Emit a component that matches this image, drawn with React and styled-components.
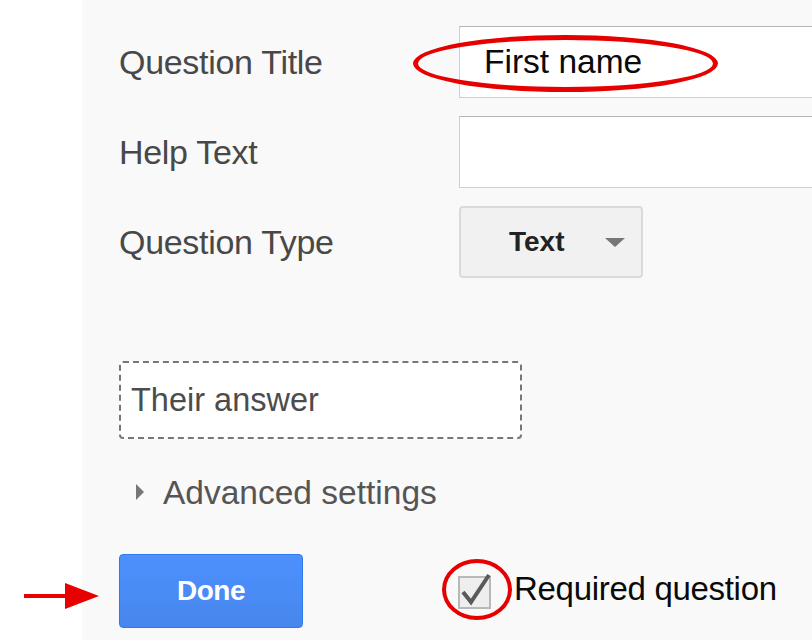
import React from "react";
import styled, { createGlobalStyle } from "styled-components";

const GlobalStyle = createGlobalStyle`
    html, body {
        margin: 0;
        padding: 0;
        background: #ffffff;
    }
    body {
        font-family: "Liberation Sans", Arial, sans-serif;
    }
`;

function App() {
    return (
        <>
            <GlobalStyle />
            <Page>
                <Gutter />
                <Panel>
                    <FormGrid>
                        <Label>Question Title</Label>
                        <InputWrap>
                            <TextInput>First name</TextInput>
                            <Ellipse />
                        </InputWrap>

                        <Label>Help Text</Label>
                        <InputWrap>
                            <TextInput />
                        </InputWrap>

                        <Label>Question Type</Label>
                        <div>
                            <Select>
                                <span>Text</span>
                                <Caret />
                            </Select>
                        </div>
                    </FormGrid>

                    <AnswerBox>Their answer</AnswerBox>

                    <Advanced>
                        <DisclosureArrow />
                        <span>Advanced settings</span>
                    </Advanced>

                    <BottomRow>
                        <ButtonCell>
                            <PointerArrow width="76" height="26" viewBox="0 0 76 26">
                                <rect x="0" y="11" width="43" height="4" fill="#e60000" />
                                <polygon points="41,0 75,13 41,26" fill="#e60000" />
                            </PointerArrow>
                            <DoneButton>Done</DoneButton>
                        </ButtonCell>
                        <Required>
                            <CheckWrap>
                                <svg width="34" height="36" viewBox="0 0 34 36">
                                    <rect x="1" y="4" width="31" height="31" fill="#eeeeee" stroke="#b8b8b8" strokeWidth="2" />
                                    <path
                                        d="M5 19 L13 29 L31 2"
                                        fill="none"
                                        stroke="#5a5a5a"
                                        strokeWidth="4"
                                        strokeLinejoin="miter"
                                    />
                                </svg>
                                <Circle />
                            </CheckWrap>
                            <RequiredText>Required question</RequiredText>
                        </Required>
                    </BottomRow>
                </Panel>
            </Page>
        </>
    );
}

const Page = styled.div`
    display: flex;
    width: 812px;
    height: 640px;
    overflow: hidden;
`;

const Gutter = styled.div`
    width: 82px;
    flex-shrink: 0;
    background: #ffffff;
`;

const Panel = styled.div`
    flex: 1;
    display: flex;
    flex-direction: column;
    padding: 26px 0 0 37px;
    background: #f9f9f9;
    min-width: 0;
`;

const FormGrid = styled.div`
    display: grid;
    grid-template-columns: 340px 1fr;
    grid-auto-rows: 72px;
    row-gap: 18px;
    align-items: center;
`;

const Label = styled.div`
    font-size: 34px;
    letter-spacing: -0.3px;
    color: #484848;
    line-height: 1;
`;

const InputWrap = styled.div`
    position: relative;
    height: 100%;
`;

const TextInput = styled.div`
    box-sizing: border-box;
    width: 420px;
    height: 100%;
    display: flex;
    align-items: center;
    padding-left: 24px;
    background: #ffffff;
    border: 1px solid #cfcfcf;
    border-top-color: #b4b4b4;
    font-size: 33.5px;
    color: #0a0a0a;
`;

const Ellipse = styled.div`
    position: absolute;
    left: -46px;
    top: 9px;
    width: 305px;
    height: 57px;
    box-sizing: border-box;
    border: 5px solid #e60000;
    border-radius: 50%;
    pointer-events: none;
`;

const Select = styled.div`
    box-sizing: border-box;
    width: 184px;
    height: 72px;
    display: flex;
    align-items: center;
    padding-left: 48px;
    background: #f1f1f1;
    border: 2px solid #dadada;
    border-radius: 4px;
    font-size: 28px;
    font-weight: bold;
    color: #222222;
`;

const Caret = styled.span`
    margin-left: 40px;
    width: 0;
    height: 0;
    border-left: 10px solid transparent;
    border-right: 10px solid transparent;
    border-top: 9px solid #777777;
`;

const AnswerBox = styled.div`
    box-sizing: border-box;
    margin-top: 83px;
    width: 403px;
    height: 78px;
    display: flex;
    align-items: center;
    padding-left: 10px;
    background: #ffffff;
    border: 2px dashed #777777;
    border-radius: 4px;
    font-size: 32.5px;
    color: #4c4c4c;
`;

const Advanced = styled.div`
    margin-top: 34px;
    height: 40px;
    display: flex;
    align-items: center;
    gap: 19px;
    padding-left: 17px;
    font-size: 33.5px;
    color: #555555;
`;

const DisclosureArrow = styled.span`
    width: 0;
    height: 0;
    margin-top: -2px;
    border-top: 8px solid transparent;
    border-bottom: 8px solid transparent;
    border-left: 8px solid #777777;
`;

const BottomRow = styled.div`
    margin-top: 41px;
    display: grid;
    grid-template-columns: 339px 1fr;
    align-items: center;
`;

const ButtonCell = styled.div`
    position: relative;
`;

const PointerArrow = styled.svg`
    position: absolute;
    left: -95px;
    top: 29px;
`;

const DoneButton = styled.button`
    box-sizing: border-box;
    width: 184px;
    height: 74px;
    border: 1px solid #3079ed;
    border-radius: 4px;
    background: linear-gradient(#4d90fe, #4787ed);
    color: #ffffff;
    font-family: "Liberation Sans", Arial, sans-serif;
    font-size: 28px;
    font-weight: bold;
    letter-spacing: -0.5px;
    cursor: pointer;
`;

const Required = styled.div`
    display: flex;
    align-items: center;
    gap: 22px;
`;

const CheckWrap = styled.div`
    position: relative;
    width: 34px;
    height: 36px;
    & svg {
        display: block;
    }
`;

const Circle = styled.div`
    position: absolute;
    left: -16px;
    top: -14px;
    width: 70px;
    height: 61px;
    box-sizing: border-box;
    border: 4px solid #e60000;
    border-radius: 50%;
`;

const RequiredText = styled.span`
    font-size: 33px;
    letter-spacing: -0.3px;
    color: #0a0a0a;
    line-height: 1;
    margin-top: -6px;
`;

export default App;
